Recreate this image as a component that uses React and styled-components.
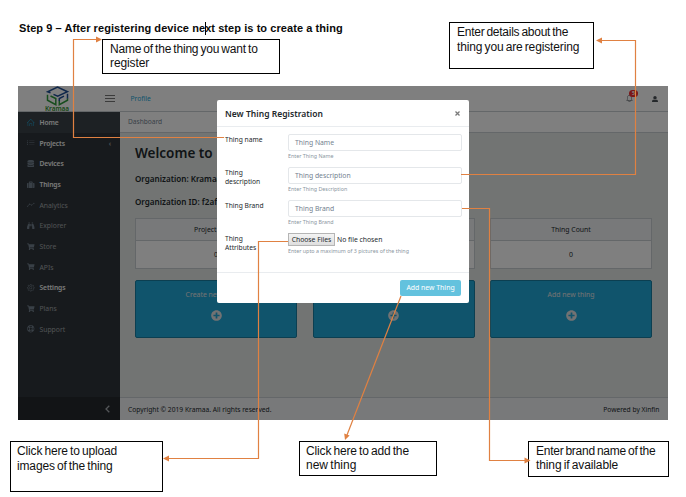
import React from "react";
import styled, { createGlobalStyle } from "styled-components";
import {
  FaShoppingCart,
  FaBinoculars,
  FaPlusCircle,
  FaUserAlt,
  FaDatabase,
  FaSuitcase,
  FaRegLifeRing,
} from "react-icons/fa";
import { SlHome, SlList, SlSettings, SlGraph, SlBell } from "react-icons/sl";

const ui = `"Noto Sans", "Open Sans", sans-serif`;
const doc = `"Liberation Sans", Arial, sans-serif`;
const orange = "#e08142";

const GlobalStyle = createGlobalStyle`
  * { box-sizing: border-box; }
  body { margin: 0; background: #fff; overflow: hidden; }
`;

const Page = styled.main`
  position: relative;
  width: 686px;
  height: 497px;
  padding: 20px 18px 0;
  font-family: ${ui};
`;

const StepTitle = styled.h1`
  margin: 0 0 0 1px;
  height: 66px;
  font: bold 11px/16px ${doc};
  letter-spacing: 0.07px;
  color: #0a0a0a;
  white-space: nowrap;
`;

const Caret = styled.span`
  display: inline-block;
  width: 1px;
  height: 13px;
  margin: 0 -1px 0 0;
  vertical-align: -3px;
  background: #000;
`;

const AppFrame = styled.section`
  position: relative;
  width: 650px;
  height: 334px;
  display: grid;
  grid-template-rows: 26px 1fr;
  overflow: hidden;
  color: #23282c;
`;

const Header = styled.header`
  display: flex;
  align-items: center;
  background: #fff;
  border-bottom: 1px solid #c8ced3;
`;

const Brand = styled.div`
  width: 78px;
  height: 25px;
  display: flex;
  flex-direction: column;
  align-items: center;
  color: #2f8f2f;
  font: 600 6.4px/5px ${ui};
`;

const Burger = styled.span`
  width: 10px;
  height: 7px;
  margin-left: 9px;
  border-top: 1px solid #777;
  border-bottom: 1px solid #777;
  background: linear-gradient(#777, #777) 0 2px / 10px 1px no-repeat;
`;

const ProfileLink = styled.a`
  flex: 1;
  margin-left: 15.5px;
  font-size: 6.7px;
  color: #20a8d8;
`;

const HeaderIcons = styled.div`
  display: flex;
  align-items: center;
  gap: 19px;
  padding-right: 10px;
  color: #4b5157;
  font-size: 7px;
`;

const Bell = styled.span`
  position: relative;
  display: flex;
`;

const Badge = styled.b`
  position: absolute;
  left: 3px;
  top: -5px;
  width: 9px;
  height: 7px;
  border-radius: 4px;
  background: #f52e30;
  color: #fff;
  font-size: 5px;
  line-height: 7px;
  text-align: center;
`;

const Body = styled.div`
  display: grid;
  grid-template-columns: 102px 1fr;
`;

const Sidebar = styled.nav`
  display: flex;
  flex-direction: column;
  background: #2f353a;
  color: #fff;
`;

const NavItem = styled.a`
  display: flex;
  align-items: center;
  height: 20.7px;
  padding: 0 9px;
  gap: 5px;
  font-size: ${(p) => (p.$strong ? 6.7 : 6.8)}px;
  letter-spacing: ${(p) => (p.$strong ? -0.1 : 0)}px;
  font-weight: ${(p) => (p.$strong ? 600 : 400)};
  color: ${(p) => (p.$strong ? "#f4f4f4" : "#a2a7ab")};
  background: ${(p) => (p.$active ? "#3a4248" : "transparent")};
  svg {
    width: 7.5px;
    height: 7.5px;
    color: ${(p) => (p.$active ? "#20a8d8" : "#73818f")};
  }
`;

const Chevron = styled.span`
  margin-left: auto;
  color: #a2a7ab;
  font-size: 7px;
`;

const Minimizer = styled.div`
  display: flex;
  align-items: center;
  justify-content: flex-end;
  height: 23px;
  margin-top: auto;
  padding-right: 10px;
  background: #24282c;
`;

const Main = styled.div`
  display: flex;
  flex-direction: column;
  background: #e4e8e7;
`;

const Breadcrumb = styled.div`
  height: 21px;
  padding-left: 8px;
  border-bottom: 1px solid #c8ced3;
  background: #fff;
  color: #73818f;
  font-size: 6.6px;
  line-height: 20px;
`;

const Content = styled.div`
  flex: 1;
  padding: 11px 16px 0 15px;
`;

const Welcome = styled.h2`
  margin: 0;
  font-size: 13.5px;
  line-height: 18px;
  font-weight: 600;
`;

const OrgLine = styled.p`
  margin: 11px 0 0;
  font-size: 8.1px;
  line-height: 12px;
  font-weight: 600;
`;

const Columns = styled.div`
  display: grid;
  grid-template-columns: repeat(3, 162px);
  column-gap: 15.5px;
  margin-top: ${(p) => p.$gap}px;
`;

const CountCard = styled.div`
  height: 51px;
  border: 1px solid #c8ced3;
  background: #fff;
  font-size: 6.9px;
  text-align: center;
`;

const CountTitle = styled.div`
  height: 22px;
  border-bottom: 1px solid #c8ced3;
  background: #f0f3f5;
  line-height: 22px;
`;

const CountValue = styled.div`
  line-height: 27px;
`;

const ActionCard = styled.button`
  display: flex;
  flex-direction: column;
  align-items: center;
  height: 58px;
  padding: 8px 0 0;
  gap: 10px;
  border: 1px solid #187ea2;
  border-radius: 2px;
  background: #20a8d8;
  color: #e4e5e6;
  font: 6.9px/11px ${ui};
  svg { width: 11px; height: 11px; }
`;

const ActionTitle = styled.span`
  height: 11px;
`;

const Footer = styled.footer`
  display: flex;
  align-items: center;
  justify-content: space-between;
  height: 23px;
  padding: 0 8.5px 0 8px;
  border-top: 1px solid #c8ced3;
  background: #f0f3f5;
  font-size: 6.7px;
`;

const Backdrop = styled.div`
  position: absolute;
  inset: 0;
  background: rgba(0, 0, 0, 0.5);
`;

const Dialog = styled.form`
  position: absolute;
  left: 199px;
  top: 14px;
  width: 252px;
  height: 203px;
  display: grid;
  grid-template-rows: 27px 1fr 31px;
  border-radius: 2px;
  background: #fff;
  color: #23282c;
`;

const DialogHeader = styled.div`
  display: flex;
  align-items: center;
  justify-content: space-between;
  padding: 0 8px;
  border-bottom: 1px solid #e9ecef;
  font-size: 8.5px;
  letter-spacing: 0.03px;
  font-weight: 600;
`;

const Fields = styled.div`
  padding-top: 7px;
`;

const Field = styled.div`
  display: grid;
  grid-template-columns: 63px 174px;
  height: 33px;
  padding-left: 8px;
`;

const Label = styled.label`
  padding-top: 1px;
  font-size: 6.7px;
  line-height: 9.4px;
  white-space: pre-line;
`;

const Input = styled.div`
  height: 17px;
  padding-left: 6px;
  border: 1px solid #e4e7ea;
  border-radius: 2px;
  color: #73818f;
  font-size: 6.8px;
  line-height: 15px;
`;

const Help = styled.div`
  margin-top: 2px;
  color: #8a95a0;
  font-size: 5.35px;
  line-height: 7px;
  white-space: nowrap;
`;

const FilePicker = styled.div`
  display: flex;
  align-items: center;
  gap: 2px;
  height: 13px;
  font-size: 6.8px;
`;

const FileButton = styled.span`
  width: 47px;
  height: 13px;
  border: 1px solid #b5b5b5;
  background: linear-gradient(#f4f4f4, #dedede);
  line-height: 11px;
  text-align: center;
`;

const DialogFooter = styled.div`
  display: flex;
  align-items: flex-start;
  justify-content: flex-end;
  padding: 7px 8px 0 0;
  border-top: 1px solid #e9ecef;
`;

const Submit = styled.span`
  width: 61px;
  height: 16px;
  border-radius: 2px;
  background: #63c2de;
  color: #fff;
  font-size: 6.9px;
  line-height: 16px;
  text-align: center;
`;

const Arrows = styled.svg`
  position: absolute;
  inset: 0;
  pointer-events: none;
`;

const Callout = styled.div`
  position: absolute;
  left: ${(p) => p.$x}px;
  top: ${(p) => p.$y}px;
  width: ${(p) => p.$w}px;
  height: ${(p) => p.$h}px;
  padding: 2px 0 0 ${(p) => p.$pad}px;
  border: 1px solid #000;
  background: #fff;
  color: #111;
  font: 12px/${(p) => p.$line}px ${doc};
  white-space: nowrap;
`;

const TextLine = styled.div`
  letter-spacing: ${(p) => p.$track}px;
  word-spacing: -1px;
`;

const nav = [
  ["Home", SlHome, true],
  ["Projects", SlList, true],
  ["Devices", FaDatabase, true],
  ["Things", FaSuitcase, true],
  ["Analytics", SlGraph, false],
  ["Explorer", FaBinoculars, false],
  ["Store", FaShoppingCart, false],
  ["APIs", FaShoppingCart, false],
  ["Settings", SlSettings, true],
  ["Plans", FaShoppingCart, false],
  ["Support", FaRegLifeRing, false],
];

const counts = [
  { id: "projects", title: "Project Count", value: 0 },
  { id: "devices" },
  { id: "things", title: "Thing Count", value: 0 },
];

const actions = [
  { id: "projects", title: "Create new project" },
  { id: "devices" },
  { id: "things", title: "Add new thing" },
];

const fields = [
  ["Thing name", "Thing Name", "Enter Thing Name"],
  ["Thing\ndescription", "Thing description", "Enter Thing Description"],
  ["Thing Brand", "Thing Brand", "Enter Thing Brand"],
];

const callouts = [
  { box: [102, 39, 178, 35], pad: 7, line: 14, lines: [["Name of the thing you want to", -0.2], ["register", -0.1]] },
  { box: [449, 22, 145, 47], pad: 7, line: 15, lines: [["Enter details about the", -0.26], ["thing you are registering", -0.14]] },
  { box: [10, 441, 153, 51], pad: 6, line: 15, lines: [["Click here to upload", -0.15], ["images of the thing", -0.15]] },
  { box: [299, 441, 138, 35], pad: 6, line: 14, lines: [["Click here to add the", -0.15], ["new thing", 0]] },
  { box: [528, 441, 141, 36], pad: 7, line: 14, lines: [["Enter brand name of the", -0.26], ["thing if available", -0.11]] },
];

function Logo() {
  return (
    <svg width="23" height="20" viewBox="0 0 23 20" fill="none" strokeWidth="1.5">
      <path d="M4.500 6.800 1.600 5.800 11.500 1l10 4.700-9.800 4.500-4.200-1.800" stroke="#1f4f94" />
      <path d="M1.500 8.800v5.400l8.300 4.500v-6.200L4.500 10" stroke="#2f9a3c" />
      <path d="M13.300 14.500v4.200l8.200-4.500v-2" stroke="#2f9a3c" />
      <path d="M21.500 7.800v4.600M13.300 15v-2.500l4.700-2.300" stroke="#1f4f94" />
    </svg>
  );
}

export default function App() {
  return (
    <Page>
      <GlobalStyle />
      <StepTitle>
        Step 9 – After registering device ne<Caret />xt step is to create a thing
      </StepTitle>

      <AppFrame>
        <Header>
          <Brand>
            <Logo />
            Kramaa
          </Brand>
          <Burger />
          <ProfileLink>Profile</ProfileLink>
          <HeaderIcons>
            <Bell>
              <SlBell />
              <Badge>5</Badge>
            </Bell>
            <FaUserAlt size={6} />
          </HeaderIcons>
        </Header>
        <Body>
          <Sidebar>
            {nav.map(([name, Icon, strong], i) => (
              <NavItem key={name} $strong={strong} $active={i === 0}>
                <Icon />
                {name}
                {name === "Projects" && <Chevron>‹</Chevron>}
              </NavItem>
            ))}
            <Minimizer>
              <svg width="5" height="8" fill="none" stroke="#a8adb2" strokeWidth="1.3">
                <path d="M4.300 .7 1 4l3.300 3.300" />
              </svg>
            </Minimizer>
          </Sidebar>
          <Main>
            <Breadcrumb>Dashboard</Breadcrumb>
            <Content>
              <Welcome>Welcome to</Welcome>
              <OrgLine>Organization: Kramaa</OrgLine>
              <OrgLine>Organization ID: f2af</OrgLine>
              <Columns $gap={10}>
                {counts.map(({ id, title, value }) => (
                  <CountCard key={id}>
                    <CountTitle>{title}</CountTitle>
                    <CountValue>{value}</CountValue>
                  </CountCard>
                ))}
              </Columns>
              <Columns $gap={11}>
                {actions.map(({ id, title }) => (
                  <ActionCard key={id}>
                    <ActionTitle>{title}</ActionTitle>
                    <FaPlusCircle />
                  </ActionCard>
                ))}
              </Columns>
            </Content>
            <Footer>
              <span>Copyright © 2019 Kramaa. All rights reserved.</span>
              <span>Powered by Xinfin</span>
            </Footer>
          </Main>
        </Body>
        <Backdrop />
        <Dialog>
          <DialogHeader>
            New Thing Registration
            <svg width="7" height="7" stroke="#7a7a7a" strokeWidth="1.300">
              <path d="M1.500 1.500l4 4M5.500 1.500l-4 4" />
            </svg>
          </DialogHeader>
          <Fields>
            {fields.map(([label, placeholder, help]) => (
              <Field key={label}>
                <Label>{label}</Label>
                <div>
                  <Input>{placeholder}</Input>
                  <Help>{help}</Help>
                </div>
              </Field>
            ))}
            <Field>
              <Label>{"Thing\nAttributes"}</Label>
              <div>
                <FilePicker>
                  <FileButton>Choose Files</FileButton>
                  No file chosen
                </FilePicker>
                <Help>Enter upto a maximum of 3 pictures of the thing</Help>
              </div>
            </Field>
          </Fields>
          <DialogFooter>
            <Submit>Add new Thing</Submit>
          </DialogFooter>
        </Dialog>
      </AppFrame>

      {callouts.map(({ box: [x, y, w, h], pad, line, lines }) => (
        <Callout key={lines[0][0]} $x={x} $y={y} $w={w} $h={h} $pad={pad} $line={line}>
          {lines.map(([text, track]) => (
            <TextLine key={text} $track={track}>{text}</TextLine>
          ))}
        </Callout>
      ))}

      <Arrows width="686" height="497" fill="none" stroke={orange} strokeWidth="1.2">
        <path d="M224 137.500H73.500V39.500H97" />
        <path d="M461 174.500H635.500V40.500H601" />
        <path d="M288 241.500H258.500V458.500H168" />
        <path d="M401 296 347 435" />
        <path d="M462 208.500H489.500V460.500H525" />
        <g fill={orange} stroke="none">
          <path d="M102 39.500l-6-3v6z" />
          <path d="M596 40.500l6-3v6z" />
          <path d="M163 458.500l6-3v6z" />
          <path d="M345 440l-.8-6.600 5.400 2.100z" />
          <path d="M530.500 460.500l-6-3v6z" />
        </g>
      </Arrows>
    </Page>
  );
}
